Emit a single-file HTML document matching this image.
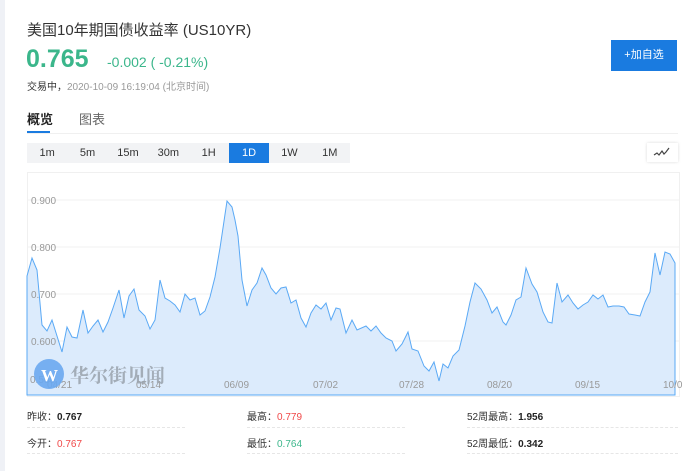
<!DOCTYPE html>
<html><head><meta charset="utf-8"><style>
*{margin:0;padding:0;box-sizing:border-box}
body{width:692px;height:471px;background:#fff;font-family:"Liberation Sans","Noto Sans CJK SC",sans-serif;position:relative;overflow:hidden}
.strip{position:absolute;left:0;top:0;width:5px;height:471px;background:#eff1f6}
.a{position:absolute;white-space:nowrap}
.btns{position:absolute;left:27px;top:143px;width:323px;height:20px;background:#f2f3f5;display:flex}
.btns div{width:40.4px;text-align:center;font-size:11px;line-height:20px;color:#333}
.btns .on{background:#1a7be0;color:#fff}
.st{font-size:10px;color:#333}
.st b{font-weight:bold;color:#222}
.dash{position:absolute;height:0;border-top:1px dashed #e6e6e6;width:158px}
</style></head><body>
<div class="strip"></div>
<div class="a" style="left:27px;top:19px;font-size:15px;color:#333">美国10年期国债收益率 (US10YR)</div>
<div class="a" style="left:26px;top:45px;font-size:25px;font-weight:bold;color:#3bb68b">0.765</div>
<div class="a" style="left:107px;top:54px;font-size:14px;color:#3bb68b">-0.002 ( -0.21%)</div>
<div class="a" style="left:27px;top:78px;font-size:10px;color:#333">交易中，<span style="color:#999">2020-10-09 16:19:04 (北京时间)</span></div>
<div class="a" style="left:611px;top:40px;width:66px;height:31px;background:#1a7be0;color:#fff;font-size:11px;line-height:31px;text-align:center">+加自选</div>
<div class="a" style="left:27px;top:109px;font-size:13px;font-weight:bold;color:#222">概览</div>
<div class="a" style="left:79px;top:109px;font-size:13px;color:#666">图表</div>
<div class="a" style="left:27px;top:131px;width:23px;height:2px;background:#1a7be0"></div>
<div class="a" style="left:27px;top:133px;width:651px;height:1px;background:#f0f0f0"></div>
<div class="btns"><div>1m</div><div>5m</div><div>15m</div><div>30m</div><div>1H</div><div class="on">1D</div><div>1W</div><div>1M</div></div>
<div class="a" style="left:647px;top:143px;width:31px;height:19px;background:#fff;box-shadow:0 0 3px rgba(0,0,0,.15)">
<svg width="31" height="19"><path d="M7 12 L10 10 L12 12 L15 8 L17 11 L19 9 L22 5" fill="none" stroke="#444" stroke-width="1.2"/></svg></div>
<svg class="a" style="left:0;top:0" width="692" height="400">
<rect x="27.5" y="172.5" width="652" height="224" fill="none" stroke="#f0f0f0"/>
<g stroke="#f0f0f0"><line x1="28" x2="679" y1="200" y2="200"/><line x1="28" x2="679" y1="247" y2="247"/><line x1="28" x2="679" y1="294" y2="294"/><line x1="28" x2="679" y1="341" y2="341"/></g>
<path fill="#dcebfc" stroke="#5aa9f5" stroke-width="1" d="M27 276 L32 258 L37 270 L42 325 L47 331 L52 320 L57 336 L62 352 L67 327 L72 337 L77 338 L83 310 L88 333 L93 326 L98 320 L103 332 L108 322 L113 308 L119 290 L124 318 L129 296 L134 289 L139 310 L145 316 L150 329 L155 320 L160 280 L165 298 L170 301 L175 305 L180 312 L185 294 L190 300 L195 298 L200 315 L205 311 L210 297 L215 277 L220 248 L227 201 L232 207 L235 220 L238 236 L242 280 L247 306 L252 290 L257 283 L262 268 L266 275 L271 288 L276 294 L281 288 L286 287 L291 303 L296 300 L301 318 L306 327 L311 313 L316 305 L321 309 L326 303 L331 320 L336 308 L340 309 L346 333 L352 320 L357 330 L366 326 L371 331 L376 326 L381 333 L386 338 L392 341 L396 351 L402 344 L408 332 L412 349 L418 351 L424 366 L429 371 L434 362 L439 381 L443 364 L448 368 L453 356 L459 350 L465 326 L470 302 L475 283 L481 289 L487 300 L492 313 L497 307 L503 322 L506 325 L511 315 L516 300 L521 297 L526 268 L532 284 L537 292 L543 312 L548 322 L552 323 L557 283 L562 302 L568 295 L573 303 L578 309 L583 305 L588 302 L593 295 L598 299 L603 295 L608 307 L613 306 L619 306 L624 307 L629 314 L635 315 L640 316 L645 302 L650 292 L655 253 L660 275 L665 252 L670 254 L675 263 L675 395 L27 395 Z"/>
<g font-size="10" fill="#999" font-family="Liberation Sans,sans-serif">
<text x="31" y="204">0.900</text><text x="31" y="251">0.800</text><text x="31" y="298">0.700</text><text x="31" y="345">0.600</text><text x="30" y="383">0.500</text>
<text x="47" y="388">04/21</text><text x="136" y="388">05/14</text><text x="224" y="388">06/09</text><text x="313" y="388">07/02</text><text x="399" y="388">07/28</text><text x="487" y="388">08/20</text><text x="575" y="388">09/15</text><text x="663" y="388">10/0</text></g>
<circle cx="49" cy="374" r="15" fill="#6aa8ef" opacity=".9"/>
<text x="41" y="381" font-size="17" font-weight="bold" fill="#fff" font-family="Liberation Serif,serif">W</text>
<text x="70" y="382" font-size="19" fill="#9aa3ad" font-family="Liberation Serif,'Noto Serif CJK SC',serif" font-weight="bold" opacity=".85">华尔街见闻</text>
</svg>
<div class="a st" style="left:27px;top:408px">昨收：<b>0.767</b></div>
<div class="a st" style="left:247px;top:408px">最高：<span style="color:#f04848">0.779</span></div>
<div class="a st" style="left:467px;top:408px">52周最高：<b>1.956</b></div>
<div class="a st" style="left:27px;top:435px">今开：<span style="color:#f04848">0.767</span></div>
<div class="a st" style="left:247px;top:435px">最低：<span style="color:#3bb68b">0.764</span></div>
<div class="a st" style="left:467px;top:435px">52周最低：<b>0.342</b></div>
<div class="dash" style="left:27px;top:427px"></div><div class="dash" style="left:247px;top:427px"></div><div class="dash" style="left:467px;top:427px;width:211px"></div>
<div class="dash" style="left:27px;top:453px"></div><div class="dash" style="left:247px;top:453px"></div><div class="dash" style="left:467px;top:453px;width:211px"></div>
</body></html>
